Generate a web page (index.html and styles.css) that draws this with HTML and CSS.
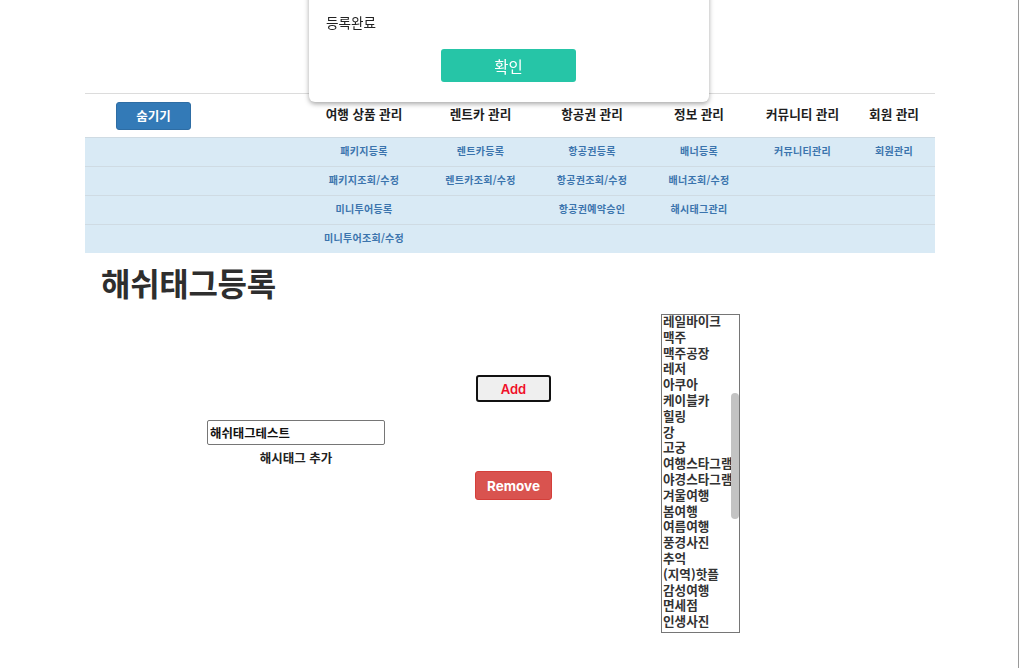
FILE: index.html
```html
<!DOCTYPE html>
<html lang="ko">
<head>
<meta charset="utf-8">
<title>해쉬태그등록</title>
<link rel="stylesheet" href="styles.css">
</head>
<body>
<div class="modal">
  <p class="modal-msg">등록완료</p>
  <button class="modal-ok">확인</button>
</div>

<div class="wrap">
  <nav class="gnb">
    <div class="gnb-row gnb-head">
      <div class="cell cell-first"><button class="btn-hide">숨기기</button></div>
      <div class="cell">여행 상품 관리</div>
      <div class="cell">렌트카 관리</div>
      <div class="cell">항공권 관리</div>
      <div class="cell">정보 관리</div>
      <div class="cell">커뮤니티 관리</div>
      <div class="cell">회원 관리</div>
    </div>
    <div class="gnb-row gnb-sub">
      <div class="cell"></div>
      <div class="cell">패키지등록</div>
      <div class="cell">렌트카등록</div>
      <div class="cell">항공권등록</div>
      <div class="cell">배너등록</div>
      <div class="cell">커뮤니티관리</div>
      <div class="cell">회원관리</div>
    </div>
    <div class="gnb-row gnb-sub">
      <div class="cell"></div>
      <div class="cell">패키지조회/수정</div>
      <div class="cell">렌트카조회/수정</div>
      <div class="cell">항공권조회/수정</div>
      <div class="cell">배너조회/수정</div>
      <div class="cell"></div>
      <div class="cell"></div>
    </div>
    <div class="gnb-row gnb-sub">
      <div class="cell"></div>
      <div class="cell">미니투어등록</div>
      <div class="cell"></div>
      <div class="cell">항공권예약승인</div>
      <div class="cell">해시태그관리</div>
      <div class="cell"></div>
      <div class="cell"></div>
    </div>
    <div class="gnb-row gnb-sub">
      <div class="cell"></div>
      <div class="cell">미니투어조회/수정</div>
      <div class="cell"></div>
      <div class="cell"></div>
      <div class="cell"></div>
      <div class="cell"></div>
      <div class="cell"></div>
    </div>
  </nav>

  <h2 class="title">해쉬태그등록</h2>

  <section class="tag-form">
    <div class="input-col">
      <input class="tag-input" type="text" value="해쉬태그테스트">
      <span class="tag-label">해시태그 추가</span>
    </div>
    <div class="btn-col">
      <button class="btn-add">Add</button>
      <button class="btn-remove">Remove</button>
    </div>
    <div class="list-col">
      <div class="tag-list">
        <ul class="tag-items">
          <li>레일바이크</li>
          <li>맥주</li>
          <li>맥주공장</li>
          <li>레저</li>
          <li>아쿠아</li>
          <li>케이블카</li>
          <li>힐링</li>
          <li>강</li>
          <li>고궁</li>
          <li>여행스타그램</li>
          <li>야경스타그램</li>
          <li>겨울여행</li>
          <li>봄여행</li>
          <li>여름여행</li>
          <li>풍경사진</li>
          <li>추억</li>
          <li>(지역)핫플</li>
          <li>감성여행</li>
          <li>면세점</li>
          <li>인생사진</li>
        </ul>
        <div class="thumb"></div>
      </div>
    </div>
  </section>
</div>
</body>
</html>
```

FILE: styles.css
```css
* { box-sizing: border-box; }
html, body { margin: 0; padding: 0; }
body {
  font-family: "Noto Sans CJK KR", "Noto Sans", sans-serif;
  color: #222;
  background: #fff;
  min-height: 668px;
  padding-left: 2px;
  border-right: 1px solid #9a9a9a;
  overflow: hidden;
}

/* modal */
.modal {
  position: fixed;
  left: 309px;
  top: -20px;
  width: 400px;
  height: 122px;
  background: #fff;
  border-radius: 6px;
  box-shadow: 0 2px 5px rgba(0,0,0,0.35);
  z-index: 10;
  padding: 32px 18px 0 17px;
  display: flex;
  flex-direction: column;
}
.modal-msg {
  margin: 0;
  font-size: 13.6px;
  line-height: 20px;
  color: #222;
}
.modal-ok {
  margin: 17px auto 0;
  width: 135px;
  height: 33px;
  border: 0;
  border-radius: 3px;
  background: #26c5a7;
  color: #fff;
  font-family: inherit;
  font-size: 15.5px;
  padding: 0;
}

/* layout */
.wrap {
  width: 850px;
  margin: 0 auto;
  padding-top: 93px;
}

.gnb { border-top: 1px solid #dcdcdc; }
.gnb-row {
  display: grid;
  grid-template-columns: 220px 118px 115px 108px 106px 101px 82px;
}
.cell {
  display: flex;
  align-items: center;
  justify-content: center;
  white-space: nowrap;
}
.gnb-head { height: 43px; }
.gnb-head .cell {
  font-size: 12.6px;
  font-weight: 700;
  color: #1e1e1e;
  padding-bottom: 4px;
}
.gnb-head .cell-first { justify-content: flex-start; padding-left: 31px; padding-bottom: 0; }
.btn-hide {
  width: 75px;
  height: 28px;
  border: 1px solid #2e6da4;
  border-radius: 3px;
  background: #337ab7;
  color: #fff;
  font-family: inherit;
  font-size: 12.5px;
  font-weight: 700;
  padding: 0;
}
.gnb-sub {
  height: 29px;
  background: #d9eaf5;
  border-top: 1px solid #cfdbe3;
}
.gnb-sub .cell {
  font-size: 10px;
  font-weight: 700;
  color: #3b74ad;
  letter-spacing: 0.3px;
  padding-bottom: 3px;
}

.title {
  margin: 10px 0 0 16px;
  font-size: 32px;
  line-height: 38px;
  font-weight: 700;
  color: #2e2e2e;
  letter-spacing: -0.3px;
}

/* form */
.tag-form {
  display: grid;
  grid-template-columns: 389px 79px 1fr;
  align-items: start;
  margin-top: 13px;
}
.input-col {
  margin: 106px 0 0 122px;
  width: 178px;
  display: flex;
  flex-direction: column;
  align-items: center;
}
.tag-input {
  width: 178px;
  height: 25px;
  border: 1px solid #767676;
  border-radius: 2px;
  padding: 0 2px;
  font-family: inherit;
  font-size: 12.4px;
  font-weight: 700;
  color: #111;
}
.tag-label {
  margin-top: 3px;
  font-size: 12.5px;
  font-weight: 700;
  color: #222;
  line-height: 19px;
}
.btn-col {
  margin-top: 61px;
  display: flex;
  flex-direction: column;
  align-items: center;
}
.btn-add {
  width: 75px;
  height: 27px;
  border: 2px solid #111;
  border-radius: 3px;
  background: #efefef;
  color: #f0102a;
  font-family: Inter, "Liberation Sans", sans-serif;
  font-size: 13px;
  font-weight: 600;
  padding: 0;
}
.btn-remove {
  margin-top: 69px;
  width: 77px;
  height: 29px;
  border: 1px solid #d43f3a;
  border-radius: 3px;
  background: #d9534f;
  color: #fff;
  font-family: Inter, "Liberation Sans", sans-serif;
  font-size: 13.5px;
  font-weight: 700;
  padding: 0;
}
.list-col { padding-left: 108px; }
.tag-list {
  position: relative;
  width: 79px;
  height: 319px;
  border: 1px solid #767676;
  overflow: hidden;
}
.tag-items {
  list-style: none;
  margin: -2px 0 0;
  padding: 0 0 0 1px;
}
.tag-items li {
  font-size: 12.6px;
  font-weight: 700;
  line-height: 15.8px;
  color: #333;
  white-space: nowrap;
}
.thumb {
  position: absolute;
  left: 69px;
  top: 78px;
  width: 8px;
  height: 126px;
  border-radius: 4px;
  background: #c3c3c3;
}
```
